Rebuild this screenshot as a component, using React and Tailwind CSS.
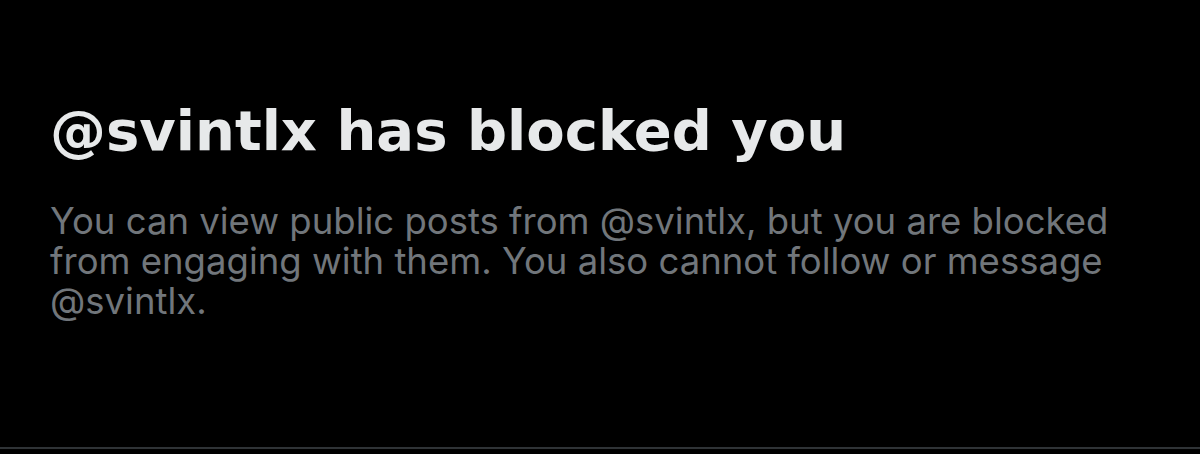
const BlockedNotice = ({ handle }) => (
  <section className="flex flex-col pl-[50px] pr-8 pt-[99px] pb-[126px] border-b-2 border-[#2f3336]">
    <h2 className="font-['DejaVu_Sans',sans-serif] text-[56px] leading-[64px] font-bold text-[#e7e9ea]">
      @{handle} has blocked you
    </h2>
    <p className="mt-[38px] text-[36.5px] leading-[40px] text-[#71767b] max-w-[1095px]">
      You can view public posts from @{handle}, but you are blocked from engaging with them. You also cannot follow or
      message @{handle}.
    </p>
  </section>
);

export default function App() {
  return (
    <div className="w-[1200px] h-[454px] bg-black overflow-hidden font-['Inter',sans-serif]">
      <BlockedNotice handle="svintlx" />
    </div>
  );
}
